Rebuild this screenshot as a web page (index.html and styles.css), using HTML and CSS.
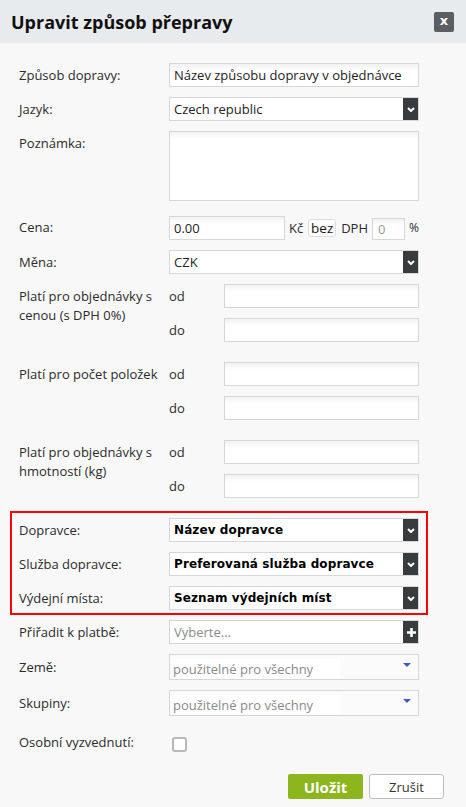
FILE: index.html
```html
<!DOCTYPE html>
<html lang="cs">
<head>
<meta charset="utf-8">
<title>Upravit způsob přepravy</title>
<link rel="stylesheet" href="styles.css">
</head>
<body>
<div class="dialog">
  <div class="header">
    <h1 class="title">Upravit způsob přepravy</h1>
    <button class="close" type="button">x</button>
  </div>
  <div class="body">
    <div class="row">
      <label class="lbl">Způsob dopravy:</label>
      <div class="field">Název způsobu dopravy v objednávce</div>
    </div>
    <div class="row">
      <label class="lbl">Jazyk:</label>
      <div class="field select"><span class="sel-text">Czech republic</span><span class="sel-btn"><svg width="8" height="5" viewBox="0 0 8 5"><polyline points="1,1 4,4 7,1" fill="none" stroke="#fff" stroke-width="2"/></svg></span></div>
    </div>
    <div class="row row-note">
      <label class="lbl">Poznámka:</label>
      <div class="field area"></div>
    </div>
    <div class="row">
      <label class="lbl">Cena:</label>
      <div class="price">
        <div class="field price-inp">0.00</div>
        <span class="unit">Kč</span>
        <span class="bez">bez</span>
        <span class="dph">DPH</span>
        <div class="field vat-inp">0</div>
        <span class="pct">%</span>
      </div>
    </div>
    <div class="row">
      <label class="lbl">Měna:</label>
      <div class="field select"><span class="sel-text">CZK</span><span class="sel-btn"><svg width="8" height="5" viewBox="0 0 8 5"><polyline points="1,1 4,4 7,1" fill="none" stroke="#fff" stroke-width="2"/></svg></span></div>
    </div>
    <div class="row row-group">
      <label class="lbl">Platí pro objednávky s cenou (s DPH 0%)</label>
      <div class="range">
        <span class="rlbl">od</span><div class="field"></div>
        <span class="rlbl">do</span><div class="field"></div>
      </div>
    </div>
    <div class="row row-group">
      <label class="lbl">Platí pro počet položek</label>
      <div class="range">
        <span class="rlbl">od</span><div class="field"></div>
        <span class="rlbl">do</span><div class="field"></div>
      </div>
    </div>
    <div class="row row-group last-group">
      <label class="lbl">Platí pro objednávky s hmotností (kg)</label>
      <div class="range">
        <span class="rlbl">od</span><div class="field"></div>
        <span class="rlbl">do</span><div class="field"></div>
      </div>
    </div>
    <div class="highlight">
      <div class="row">
        <label class="lbl">Dopravce:</label>
        <div class="field select"><span class="sel-text strong">Název dopravce</span><span class="sel-btn"><svg width="8" height="5" viewBox="0 0 8 5"><polyline points="1,1 4,4 7,1" fill="none" stroke="#fff" stroke-width="2"/></svg></span></div>
      </div>
      <div class="row">
        <label class="lbl">Služba dopravce:</label>
        <div class="field select"><span class="sel-text strong">Preferovaná služba dopravce</span><span class="sel-btn"><svg width="8" height="5" viewBox="0 0 8 5"><polyline points="1,1 4,4 7,1" fill="none" stroke="#fff" stroke-width="2"/></svg></span></div>
      </div>
      <div class="row">
        <label class="lbl">Výdejní místa:</label>
        <div class="field select"><span class="sel-text strong">Seznam výdejních míst</span><span class="sel-btn"><svg width="8" height="5" viewBox="0 0 8 5"><polyline points="1,1 4,4 7,1" fill="none" stroke="#fff" stroke-width="2"/></svg></span></div>
      </div>
    </div>
    <div class="row">
      <label class="lbl">Přiřadit k platbě:</label>
      <div class="field select"><span class="sel-text placeholder">Vyberte...</span><span class="sel-btn"><svg width="9" height="9" viewBox="0 0 9 9"><path d="M4.5 0v9M0 4.5h9" stroke="#fff" stroke-width="2.6"/></svg></span></div>
    </div>
    <div class="row row-multi">
      <label class="lbl">Země:</label>
      <div class="field multi"><span class="multi-text">použitelné pro všechny</span><span class="tri"></span></div>
    </div>
    <div class="row row-multi">
      <label class="lbl">Skupiny:</label>
      <div class="field multi"><span class="multi-text">použitelné pro všechny</span><span class="tri"></span></div>
    </div>
    <div class="row row-check">
      <label class="lbl">Osobní vyzvednutí:</label>
      <div class="check-wrap"><span class="checkbox"></span></div>
    </div>
    <div class="actions">
      <button class="btn btn-save" type="button">Uložit</button>
      <button class="btn btn-cancel" type="button">Zrušit</button>
    </div>
  </div>
</div>
</body>
</html>
```

FILE: styles.css
```css
* { box-sizing: border-box; }

html, body {
  margin: 0;
  padding: 0;
  background: #f8f8f8;
}

body {
  font-family: "Open Sans", "Liberation Sans", sans-serif;
  font-size: 13px;
  color: #2b2b2b;
}

.dialog {
  width: 466px;
  height: 807px;
  background: #f8f8f8;
  display: flex;
  flex-direction: column;
}

.header {
  height: 43px;
  background: #e8ebee;
  display: flex;
  align-items: center;
  justify-content: space-between;
  padding: 0 12px 0 11px;
}

.title {
  margin: 0;
  font-size: 18px;
  font-weight: 700;
  color: #111;
  line-height: 24px;
  padding-top: 1px;
}

.close {
  width: 20px;
  height: 20px;
  padding: 0;
  margin: 0;
  border: none;
  border-radius: 2px;
  background: #5b5e62;
  color: #fff;
  font-family: "DejaVu Sans", sans-serif;
  font-weight: 700;
  font-size: 13px;
  line-height: 18px;
  display: flex;
  align-items: center;
  justify-content: center;
  padding-bottom: 2px;
}

.body {
  padding: 20px 0 0 19px;
  display: flex;
  flex-direction: column;
}

.row {
  display: grid;
  grid-template-columns: 150px 250px;
  margin-bottom: 10px;
}

.lbl {
  padding: 3px 8px 0 0;
  line-height: 19px;
  color: #2b2b2b;
}

.field {
  height: 24px;
  border: 1px solid #d6d6d6;
  background: linear-gradient(to bottom, #f2f2f2 0, #ffffff 7px);
  padding: 0 4px;
  line-height: 22px;
  color: #222;
  white-space: nowrap;
  overflow: hidden;
}

.row-note { margin-bottom: 14px; }

.area { height: 70px; }

.select {
  display: flex;
  padding: 0 0 0 4px;
  background: #fff;
}

.sel-text {
  flex: 1;
  overflow: hidden;
}

.sel-text.strong {
  font-family: "DejaVu Sans", "Verdana", sans-serif;
  font-weight: 700;
  font-size: 12px;
  letter-spacing: 0.1px;
  color: #000;
}

.sel-text.placeholder { color: #8a8a8a; }

.sel-btn {
  width: 16px;
  margin: -1px -1px -1px 0;
  background: #393c3f;
  display: flex;
  align-items: center;
  justify-content: center;
}

.price {
  display: flex;
  align-items: center;
  white-space: nowrap;
}

.price-inp { width: 116px; margin-top: 1px; }

.unit { margin-left: 4px; color: #2b2b2b; }

.bez {
  margin-left: 5px;
  height: 18px;
  width: 28px;
  border: 1px solid #dcdcdc;
  border-radius: 3px;
  background: #fff;
  line-height: 16px;
  text-align: center;
  color: #111;
  font-size: 13.5px;
}

.dph { margin-left: 5px; }

.vat-inp {
  width: 33px;
  height: 22px;
  margin-left: 4px;
  margin-top: 2px;
  line-height: 20px;
  color: #999;
  padding-left: 5px;
}

.pct { margin-left: 4px; font-size: 12px; }

.row-group { margin-bottom: 20px; }
.row-group.last-group { margin-bottom: 13px; }

.range {
  display: grid;
  grid-template-columns: 55px 195px;
  row-gap: 10px;
}

.rlbl {
  line-height: 24px;
}

.highlight {
  margin-left: -9px;
  width: 418px;
  border: 2px solid #ff0000;
  padding: 5px 7px 3px 7px;
  margin-bottom: 5px;
}

.highlight .row:last-child { margin-bottom: 0; }

.row-multi .lbl { padding-top: 4px; }

.multi {
  height: 26px;
  display: flex;
  align-items: flex-start;
  background: #fbfbfb;
  padding: 0 7px 0 2px;
}

.multi-text {
  background: #fff;
  width: 168px;
  margin-top: 4px;
  height: 20px;
  line-height: 20px;
  color: #8a8a8a;
  padding-left: 1px;
}

.tri {
  margin-left: auto;
  margin-top: 8px;
  width: 0;
  height: 0;
  border-left: 4px solid transparent;
  border-right: 4px solid transparent;
  border-top: 4px solid #3b5cc4;
}

.row-check { margin-top: 4px; margin-bottom: 20px; }

.check-wrap {
  height: 24px;
  display: flex;
  align-items: center;
}

.checkbox {
  margin-left: 3px;
  margin-top: 4px;
  width: 15px;
  height: 15px;
  border: 2px solid #b8b8b8;
  border-radius: 3px;
  background: #fff;
}

.actions {
  display: flex;
  justify-content: flex-end;
  gap: 6px;
  padding-right: 22px;
}

.btn {
  width: 75px;
  height: 25px;
  margin: 0;
  padding: 0;
  font-family: "Open Sans", "Liberation Sans", sans-serif;
  cursor: pointer;
}

.btn-save {
  background: #8db51d;
  border: none;
  border-radius: 2px;
  color: #fff;
  font-weight: 700;
  font-size: 15px;
}

.btn-cancel {
  background: #fff;
  border: 1px solid #bcbcbc;
  border-radius: 3px;
  color: #333;
  font-size: 13px;
}
```
